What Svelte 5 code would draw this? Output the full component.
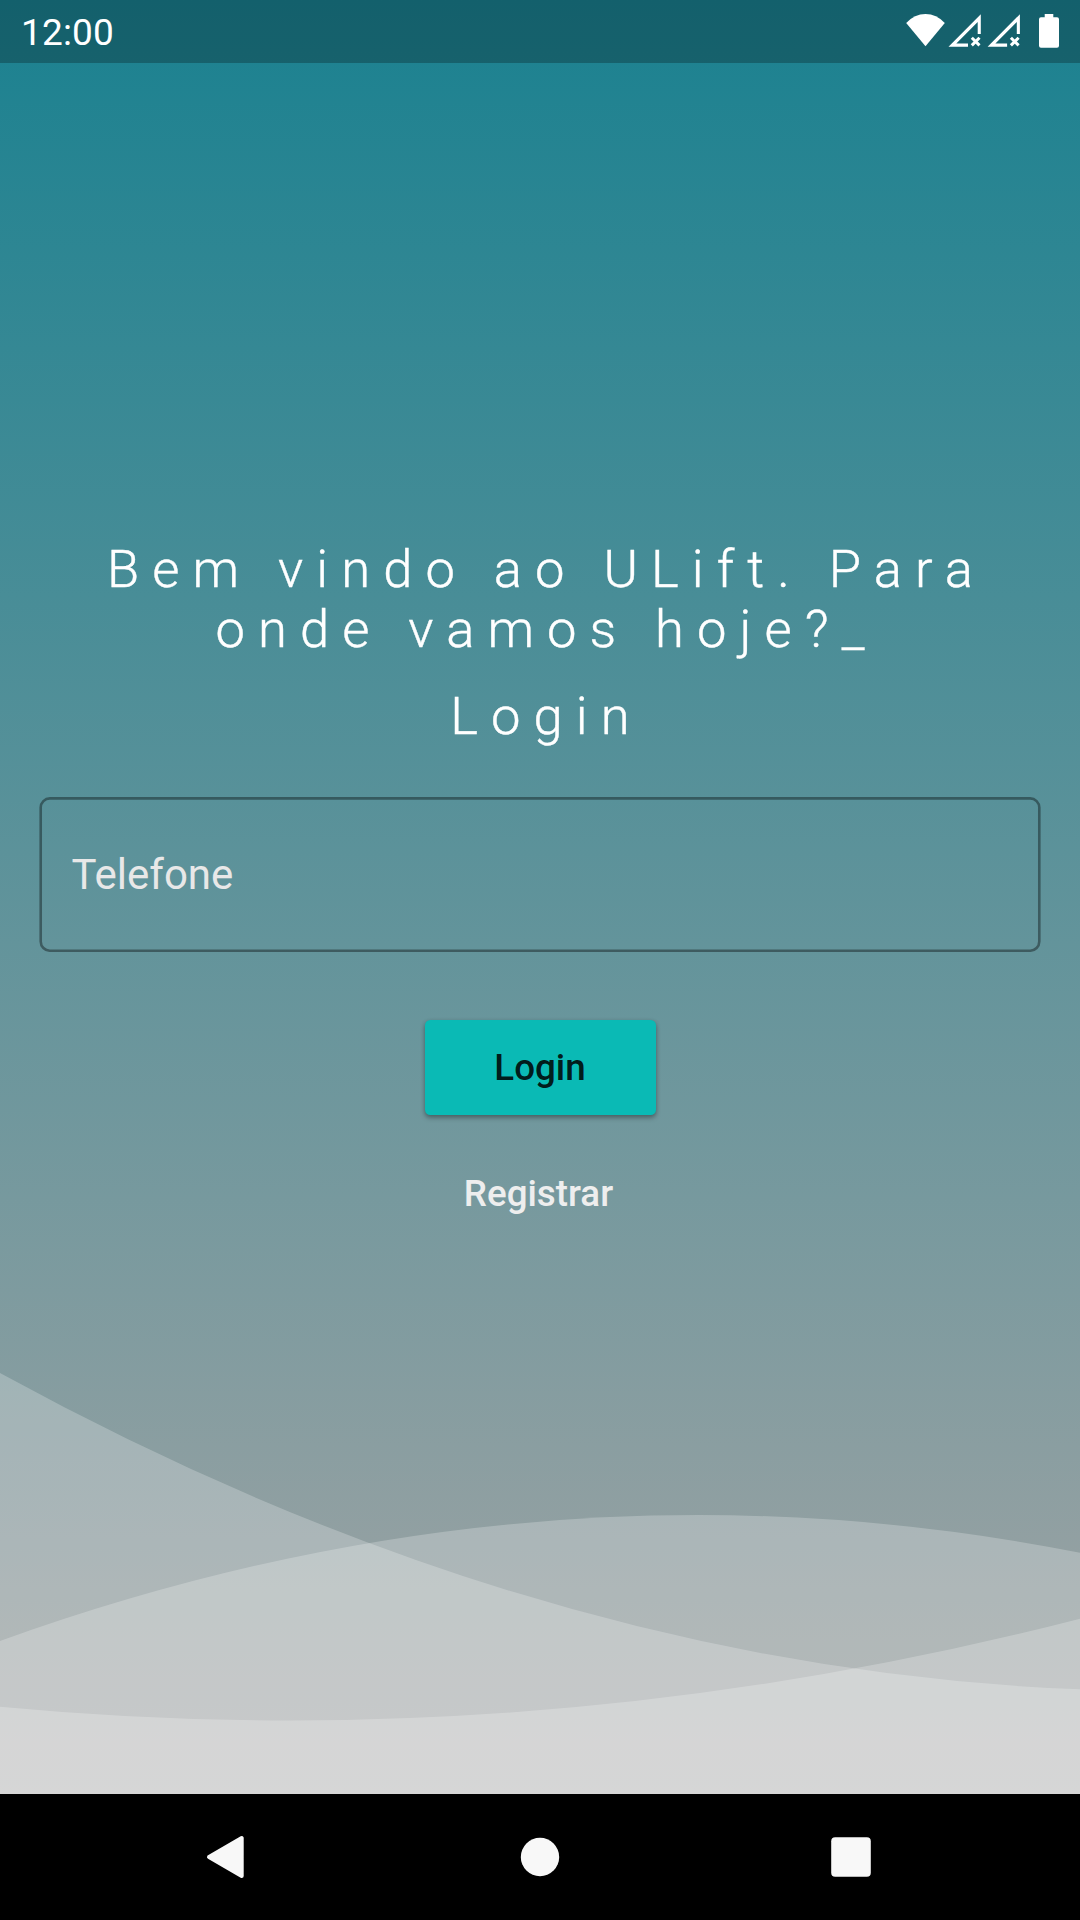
<script>
  const signals = [948.5, 987.6];
  const waves = [
    'M0 1373 Q540 1668.8 1080 1689.3 V1794 H0 Z',
    'M0 1641 Q540 1446.2 1080 1552.7 V1794 H0 Z',
    'M0 1706.7 Q540 1757.9 1080 1618.7 V1794 H0 Z'
  ];
</script>

<div class="screen">
  <svg class="waves" viewBox="0 0 1080 1794" aria-hidden="true">
    {#each waves as d}
      <path {d} />
    {/each}
  </svg>

  <header class="status">
    <span class="clock">12:00</span>
    <svg class="status-icons" viewBox="900 0 180 63" aria-hidden="true">
      <path d="M925.5 46.3 L906.2 23 Q914.5 14 925.5 14 Q936.5 14 944.8 23 Z" />
      {#each signals as x}
        <g transform="translate({x} 0)">
          <path
            fill-rule="evenodd"
            d="M32.3 14.2 V34 H29.2 V22 L7.8 43.6 H19.5 V46.8 H0 Z"
          />
          <path class="cross" d="M23.3 37.7 L31 45.4 M31 37.7 L23.3 45.4" />
        </g>
      {/each}
      <path
        d="M1044.7 14 H1053.3 V17.3 H1057 Q1059 17.3 1059 19.3 V45.8 Q1059 47.8 1057 47.8 H1041 Q1039 47.8 1039 45.8 V19.3 Q1039 17.3 1041 17.3 H1044.7 Z"
      />
    </svg>
  </header>

  <main class="content">
    <h1 class="headline">Bem vindo ao ULift. Para<br />onde vamos hoje?_</h1>
    <h2 class="headline sub">Login</h2>
    <div class="field">
      <svg class="outline" viewBox="0 0 1002 155" aria-hidden="true">
        <rect x="1.7" y="1.4" width="998.6" height="152.3" rx="9.2" />
      </svg>
      <span>Telefone</span>
    </div>
    <button class="primary">Login</button>
    <button class="link">Registrar</button>
  </main>

  <nav class="navbar">
    <svg viewBox="0 1794 1080 126" aria-hidden="true">
      <path
        class="back"
        d="M209 1857 L241.7 1838 V1876 Z"
      />
      <circle cx="540" cy="1857" r="19.2" />
      <rect x="831.2" y="1837.2" width="39.6" height="39.6" rx="4" />
    </svg>
  </nav>
</div>

<style>
  :global(body) {
    margin: 0;
  }
  .screen {
    position: relative;
    display: flex;
    flex-direction: column;
    width: 1080px;
    height: 1920px;
    overflow: hidden;
    background: linear-gradient(#1a8190 0, #a5a5a5 1794px);
    font-family: Roboto, 'Liberation Sans', sans-serif;
  }
  .waves {
    position: absolute;
    top: 0;
    left: 0;
    width: 1080px;
    height: 1794px;
    fill: rgba(255, 255, 255, 0.235);
  }
  .status {
    display: flex;
    justify-content: space-between;
    align-items: center;
    height: 63px;
    padding-left: 21px;
    background: rgba(0, 0, 0, 0.25);
    color: #fff;
  }
  .clock {
    font-size: 37px;
    line-height: 43px;
    letter-spacing: 0.15px;
    padding-top: 1px;
  }
  .status-icons {
    width: 180px;
    height: 63px;
    fill: #fff;
  }
  .cross {
    fill: none;
    stroke: #fff;
    stroke-width: 3;
  }
  .content {
    position: relative;
    display: flex;
    flex: 1;
    flex-direction: column;
    align-items: center;
    padding-top: 476px;
  }
  .headline {
    margin: 0;
    padding-left: 13px;
    color: #fff;
    font-size: 52.5px;
    font-weight: 300;
    line-height: 60px;
    letter-spacing: 13.08px;
    text-align: center;
    -webkit-text-stroke: 0.4px #fff;
  }
  .sub {
    margin-top: 27px;
  }
  .field {
    position: relative;
    display: flex;
    align-items: center;
    box-sizing: border-box;
    width: 1002px;
    height: 155px;
    margin-top: 51px;
    padding-left: 32.5px;
    color: #e8e8e8;
    font-size: 42px;
  }
  .outline {
    position: absolute;
    inset: 0;
    width: 1002px;
    height: 155px;
    fill: none;
    stroke: rgba(0, 0, 0, 0.38);
    stroke-width: 2.625;
  }
  button {
    border: 0;
    padding: 0;
    font-family: inherit;
    font-size: 36.75px;
    font-weight: 500;
    line-height: 43px;
  }
  .primary {
    width: 231px;
    height: 95px;
    margin-top: 68px;
    border-radius: 5.25px;
    background: #0abab5;
    color: rgba(0, 0, 0, 0.87);
    box-shadow:
      0 3px 5px rgba(0, 0, 0, 0.28),
      0 1px 4px rgba(0, 0, 0, 0.15);
  }
  .link {
    margin-top: 57px;
    padding-right: 3px;
    background: none;
    color: #eee;
  }
  .navbar {
    position: relative;
    height: 126px;
    background: #000;
  }
  .navbar svg {
    display: block;
    width: 1080px;
    height: 126px;
    fill: #f8f8f8;
  }
  .back {
    stroke: #f8f8f8;
    stroke-width: 4;
    stroke-linejoin: round;
  }
</style>
